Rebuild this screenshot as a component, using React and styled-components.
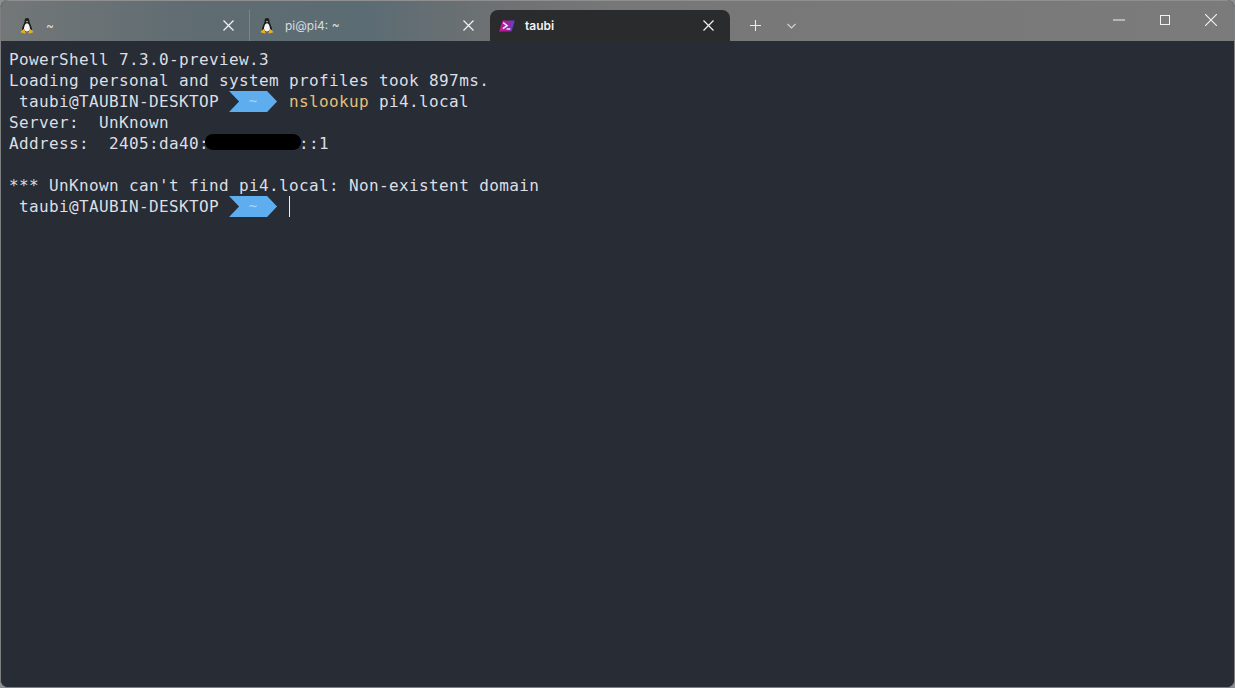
import React from "react";
import styled, { createGlobalStyle } from "styled-components";

const Global = createGlobalStyle`
  html, body { margin: 0; padding: 0; background: #8d8f90; overflow: hidden; }
  #root { width: 1235px; height: 688px; }
`;

const Win = styled.div`
  width: 1235px;
  height: 688px;
  box-sizing: border-box;
  display: flex;
  flex-direction: column;
  overflow: hidden;
  border-radius: 8px;
  background: #282c34;
  border: 1px solid #7d7f80;
  border-top: 0;
`;

const TitleBar = styled.div`
  height: 41px;
  flex: none;
  display: flex;
  align-items: flex-end;
  border-top: 1px solid #8f8f8f;
  box-sizing: border-box;
  background: linear-gradient(90deg, #737778 0%, #5f6c72 16%, #5c6c74 30%, #6b7072 38%, #777777 50%, #7b7b7b 100%);
`;

const Tab = styled.div`
  width: ${p => p.$w}px;
  height: 31px;
  flex: none;
  box-sizing: border-box;
  display: flex;
  align-items: center;
  padding-left: ${p => p.$pl}px;
  background: ${p => (p.$active ? "#2a2b2d" : "transparent")};
  border-radius: ${p => (p.$active ? "8px 8px 0 0" : "0")};
  border-right: ${p => (p.$divider ? "1px solid #7f8486" : "0")};
`;

const TabLabel = styled.span`
  margin-left: ${p => p.$ml}px;
  flex: 1;
  font: ${p => (p.$active ? 600 : 400)} 12px "Inter", "Noto Sans", sans-serif;
  color: ${p => (p.$active ? "#f2f2f2" : "#d8dcde")};
`;

const CloseBtn = styled.svg`
  width: 11px;
  height: 11px;
  flex: none;
  margin-right: ${p => p.$mr}px;
  stroke: #f2f2f2;
  stroke-width: 1.2;
  fill: none;
  margin-top: -1px;
`;

const Actions = styled.div`
  display: flex;
  align-items: center;
  height: 31px;
  margin-left: 20px;
`;

const PlusBtn = styled.svg`
  width: 11px;
  height: 11px;
  stroke: #ececec;
  stroke-width: 1.1;
  fill: none;
`;

const ChevronBtn = styled.svg`
  width: 9px;
  height: 6px;
  margin-left: 26px;
  stroke: #d4d4d4;
  stroke-width: 1.1;
  fill: none;
`;

const Controls = styled.div`
  margin-left: auto;
  height: 40px;
  display: flex;
  align-items: center;
  padding-right: 17px;
`;

const Ctl = styled.svg`
  width: ${p => p.$s}px;
  height: ${p => p.$s}px;
  margin-left: ${p => p.$ml || 0}px;
  stroke: #f2f2f2;
  stroke-width: 1;
  fill: none;
  position: relative;
  top: -1px;
`;

const Term = styled.div`
  flex: 1;
  padding: 8px 0 0 8px;
  background: #282c34;
  font-family: "DejaVu Sans Mono", monospace;
  font-size: 16px;
  letter-spacing: 0.37px;
  line-height: 21px;
  color: #dcdfe4;
`;

const Line = styled.div`
  height: 21px;
  white-space: pre;
  display: flex;
  align-items: center;
`;

const Seg = styled.span`
  width: 48px;
  height: 21px;
  margin: 0 12px 0 10px;
  flex: none;
  display: flex;
  align-items: center;
  justify-content: center;
  background: #5eadef;
  clip-path: polygon(0 0, 38px 0, 48px 50%, 38px 100%, 0 100%, 10px 50%);
  color: #a9d4f6;
  font-size: 14px;
  letter-spacing: 0;
`;

const Cmd = styled.span`
  color: #e5c07b;
`;

const Redact = styled.span`
  width: 96px;
  height: 16px;
  flex: none;
  margin: 0 -2px 4px -4px;
  border-radius: 8px;
  background: #000;
`;

const Colons = styled.span`
  position: relative;
`;

const Cursor = styled.span`
  width: 1px;
  height: 21px;
  background: #eceef0;
  flex: none;
`;

const Tux = () => (
  <svg width="14" height="16" viewBox="0 0 14 16">
    <path d="M7 0C5 0 4.5 1.6 4.6 3.4 4.6 5 2.4 7.5 2 11c-.1 1 .5 2 1.5 2.4h7c1-.4 1.6-1.4 1.5-2.4C11.6 7.5 9.4 5 9.4 3.4 9.5 1.6 9 0 7 0z" fill="#1c1c1c" />
    <path d="M7 5.2c-1.6 0-3 3-3 5.6 0 1.5 1.2 2.6 3 2.6s3-1.1 3-2.6c0-2.6-1.4-5.6-3-5.6z" fill="#f5f5f5" />
    <path d="M5.8 3.4 7 2.8l1.2.6L7 4.4z" fill="#e0a820" />
    <path d="M3.2 11.2 1 13.4c-.4.5-.3 1 .3 1.2l3.3 1c.7.1 1-.4.8-1l-.8-2.8c-.3-.8-.9-1-1.4-.6z" fill="#e8b020" />
    <path d="M10.8 11.2 13 13.4c.4.5.3 1-.3 1.2l-3.3 1c-.7.1-1-.4-.8-1l.8-2.8c.3-.8.9-1 1.4-.6z" fill="#e8b020" />
  </svg>
);

const PwshIcon = () => (
  <svg width="16" height="12" viewBox="0 0 16 12">
    <defs>
      <linearGradient id="pw" x1="0" y1="0" x2="1" y2="0">
        <stop offset="0" stopColor="#d0188f" />
        <stop offset="0.55" stopColor="#a01fa0" />
        <stop offset="1" stopColor="#4a4fd0" />
      </linearGradient>
    </defs>
    <path d="M3.5.5H15.8L12.5 11.5H.2z" fill="url(#pw)" />
    <path d="M4.2 2.6 8.2 5.6 3.8 8.6" fill="none" stroke="#e8f4ff" strokeWidth="1.4" />
    <path d="M7.5 9h3.8" stroke="#e8f4ff" strokeWidth="1.4" />
  </svg>
);

const X = ({ mr }) => (
  <CloseBtn $mr={mr} viewBox="0 0 11 11">
    <path d="M.5.5l10 10M10.5.5l-10 10" />
  </CloseBtn>
);

const Prompt = ({ children }) => (
  <Line>
    {" taubi@TAUBIN-DESKTOP"}
    <Seg>~</Seg>
    {children}
  </Line>
);

export default function App() {
  return (
    <>
      <Global />
      <Win>
        <TitleBar>
          <Tab $w={249} $pl={19} $divider>
            <Tux />
            <TabLabel $ml={12}>~</TabLabel>
            <X mr={15} />
          </Tab>
          <Tab $w={240} $pl={10}>
            <Tux />
            <TabLabel $ml={11}>pi@pi4: ~</TabLabel>
            <X mr={16} />
          </Tab>
          <Tab $w={240} $pl={9} $active>
            <PwshIcon />
            <TabLabel $ml={10} $active>taubi</TabLabel>
            <X mr={16} />
          </Tab>
          <Actions>
            <PlusBtn viewBox="0 0 11 11">
              <path d="M5.5 0v11M0 5.5h11" />
            </PlusBtn>
            <ChevronBtn viewBox="0 0 9 6">
              <path d="M.5 1l4 4 4-4" />
            </ChevronBtn>
          </Actions>
          <Controls>
            <Ctl $s={12} viewBox="0 0 12 12"><path d="M0 6h12" /></Ctl>
            <Ctl $s={10} $ml={35} viewBox="0 0 10 10"><rect x=".5" y=".5" width="9" height="9" /></Ctl>
            <Ctl $s={12} $ml={35} viewBox="0 0 11 11"><path d="M0 0l11 11M11 0L0 11" /></Ctl>
          </Controls>
        </TitleBar>
        <Term>
          <Line>PowerShell 7.3.0-preview.3</Line>
          <Line>Loading personal and system profiles took 897ms.</Line>
          <Prompt><Cmd>nslookup</Cmd>{" pi4.local"}</Prompt>
          <Line>Server:  UnKnown</Line>
          <Line>{"Address:  2405:da40:"}<Redact /><Colons>::1</Colons></Line>
          <Line />
          <Line>*** UnKnown can't find pi4.local: Non-existent domain</Line>
          <Prompt><Cursor /></Prompt>
        </Term>
      </Win>
    </>
  );
}
